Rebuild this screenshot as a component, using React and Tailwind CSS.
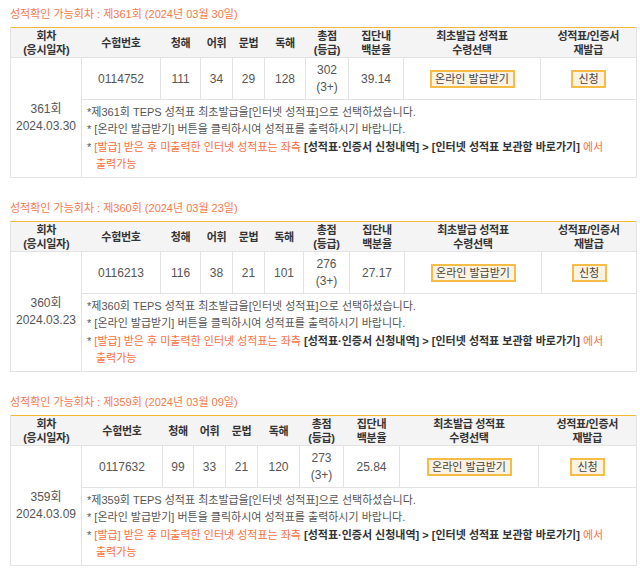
import React from "react";

const sessions = [
  {
    round: "361",
    date: "2024.03.30",
    day: "2024년 03월 30일",
    examNo: "0114752",
    scores: [111, 34, 29, 128],
    total: 302,
    grade: "3+",
    pct: "39.14",
    cols: ["w-[71px]", "w-[79px]", "w-[40px]", "w-[32px]", "w-[32px]", "w-[41px]", "w-[43px]", "w-[55px]", "w-[137px]", "w-[96px]"],
  },
  {
    round: "360",
    date: "2024.03.23",
    day: "2024년 03월 23일",
    examNo: "0116213",
    scores: [116, 38, 21, 101],
    total: 276,
    grade: "3+",
    pct: "27.17",
    cols: ["w-[71px]", "w-[79px]", "w-[40px]", "w-[32px]", "w-[32px]", "w-[39px]", "w-[46px]", "w-[55px]", "w-[137px]", "w-[95px]"],
  },
  {
    round: "359",
    date: "2024.03.09",
    day: "2024년 03월 09일",
    examNo: "0117632",
    scores: [99, 33, 21, 120],
    total: 273,
    grade: "3+",
    pct: "25.84",
    cols: ["w-[71px]", "w-[81px]", "w-[31px]", "w-[32px]", "w-[32px]", "w-[42px]", "w-[44px]", "w-[56px]", "w-[139px]", "w-[98px]"],
  },
];

const headers = [
  ["회차", "(응시일자)"],
  ["수험번호"],
  ["청해"],
  ["어휘"],
  ["문법"],
  ["독해"],
  ["총점", "(등급)"],
  ["집단내", "백분율"],
  ["최초발급 성적표", "수령선택"],
  ["성적표/인증서", "재발급"],
];

const td = "border border-[#e3e3e3] text-center align-middle";
const btn =
  "h-[18px] border-2 border-[#f5bd45] bg-[#fcf2e2] text-[11px] leading-[14px] text-[#444]";

const ScoreTable = ({ s }) => {
  return (
    <div className="mb-[21px]">
      <div className="h-[18px] leading-[18px] mb-[4px] text-[11px] text-[#f47a4a]">
        성적확인 가능회차 : 제{s.round}회 ({s.day})
      </div>
      <table className="w-[626px] table-fixed border-collapse border-t border-t-[#f3b83c] text-[#555]">
        <colgroup>
          {s.cols.map((c, i) => (
            <col key={i} className={c} />
          ))}
        </colgroup>
        <thead>
          <tr className="h-[30px] bg-[#f4f4f4]">
            {headers.map((h, i) => (
              <th
                key={i}
                className={
                  "border-b border-b-[#e3e3e3] text-center align-middle font-bold text-[11px] tracking-[-0.3px] leading-[14px] text-[#333] " +
                  (i === 0 ? "border-l border-l-[#e3e3e3]" : "") +
                  (i === 9 ? "border-r border-r-[#e3e3e3]" : "")
                }
              >
                {h.map((line, j) => (
                  <div key={j}>{line}</div>
                ))}
              </th>
            ))}
          </tr>
        </thead>
        <tbody className="text-[12px]">
          <tr className="h-[42px]">
            <td rowSpan={2} className={td + " leading-[17px]"}>
              <div>{s.round}회</div>
              <div>{s.date}</div>
            </td>
            <td className={td}>{s.examNo}</td>
            {s.scores.map((v, i) => (
              <td key={i} className={td}>
                {v}
              </td>
            ))}
            <td className={td + " leading-[17px]"}>
              <div>{s.total}</div>
              <div>({s.grade})</div>
            </td>
            <td className={td}>{s.pct}</td>
            <td className={td}>
              <button className={btn + " w-[85px]"}>온라인 발급받기</button>
            </td>
            <td className={td}>
              <button className={btn + " w-[35px]"}>신청</button>
            </td>
          </tr>
          <tr className="h-[78px]">
            <td colSpan={9} className="border border-[#e3e3e3] px-[5px] align-middle text-[11px] leading-[17.5px] text-[#555]">
              <div>*제{s.round}회 TEPS 성적표 최초발급을[인터넷 성적표]으로 선택하셨습니다.</div>
              <div>* [온라인 발급받기] 버튼을 클릭하시여 성적표를 출력하시기 바랍니다.</div>
              <div className="whitespace-nowrap">
                *{" "}
                <span className="text-[#f8703e]">[발급] 받은 후 미출력한 인터넷 성적표는 좌측 </span>
                <span className="font-bold text-[#333]">
                  [성적표·인증서 신청내역] &gt; [인터넷 성적표 보관함 바로가기]
                </span>
                <span className="text-[#f8703e]"> 에서</span>
              </div>
              <div className="pl-[9px] text-[#f8703e]">출력가능</div>
            </td>
          </tr>
        </tbody>
      </table>
    </div>
  );
}

export default function App() {
  return (
    <div className="w-[640px] pl-[10px] pt-[5px] bg-white font-['Liberation_Sans','Noto_Sans_CJK_KR',sans-serif]">
      {sessions.map((s) => (
        <ScoreTable key={s.round} s={s} />
      ))}
    </div>
  );
}
